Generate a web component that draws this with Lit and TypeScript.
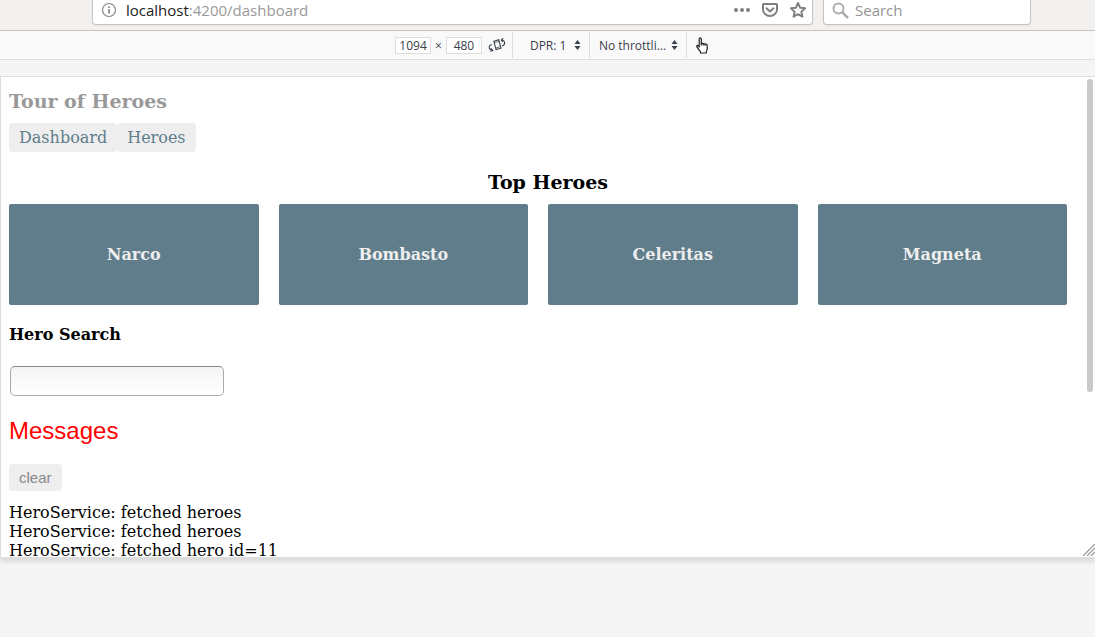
import { LitElement, html, css } from "lit";
import { customElement, property, state } from "lit/decorators.js";

const chromeFont = css`"Open Sans", "Noto Sans", sans-serif`;

@customElement("browser-bar")
class BrowserBar extends LitElement {
  static styles = css`
    :host {
      display: flex;
      gap: 10px;
      height: 30px;
      padding: 0 64px 0 92px;
      border-bottom: 1px solid #c8c4c0;
      background: #f2f1ef;
      font-family: ${chromeFont};
      font-size: 15px;
    }
    .box {
      box-sizing: border-box;
      display: flex;
      align-items: center;
      height: 25px;
      padding-bottom: 4px;
      border: 1px solid #c8c4c0;
      border-top: 0;
      border-radius: 0 0 4px 4px;
      background: #fff;
      box-shadow: 0 1px 2px rgba(0, 0, 0, 0.06);
    }
    .address {
      flex: 1;
      padding-left: 8px;
      padding-right: 5px;
    }
    .url {
      flex: 1;
      margin-left: 9px;
      color: #999;
    }
    .host {
      color: #222;
    }
    .actions {
      display: flex;
      align-items: center;
      gap: 10px;
    }
    button {
      display: flex;
      padding: 0;
      border: 0;
      background: none;
    }
    svg {
      display: block;
      flex: none;
    }
    .search {
      width: 208px;
      padding-left: 8px;
    }
    input {
      flex: 1;
      min-width: 0;
      margin-left: 6px;
      padding: 0;
      border: 0;
      outline: 0;
      background: none;
      font: inherit;
    }
    input::placeholder {
      color: #949494;
      opacity: 1;
    }
  `;

  render() {
    return html`
      <div class="box address">
        <svg width="16" height="16" viewBox="0 0 16 16" fill="none" stroke="#858585">
          <circle cx="8" cy="8" r="6.5" stroke-width="1.2" />
          <path d="M8 7.2v4.2M8 4.4v1.7" stroke-width="1.8" />
        </svg>
        <span class="url"><span class="host">localhost</span>:4200/dashboard</span>
        <div class="actions">
          <button aria-label="Page actions">
            <svg width="18" height="16" viewBox="0 0 18 16" fill="#808080">
              <circle cx="3" cy="8" r="2" /><circle cx="9" cy="8" r="2" /><circle cx="15" cy="8" r="2" />
            </svg>
          </button>
          <button aria-label="Save to Pocket">
            <svg width="18" height="16" viewBox="0 0 18 16" fill="none" stroke="#808080" stroke-width="2" stroke-linejoin="round" stroke-linecap="round">
              <path d="M2.5 2h13q.5 0 .5.5V7.500a7 6.500 0 0 1-14 0v-5q0-.5.5-.5z" />
              <path d="M5.500 6.300 9 9.500l3.500-3.200" />
            </svg>
          </button>
          <button aria-label="Bookmark this page">
            <svg width="18" height="18" viewBox="0 0 18 18" fill="none" stroke="#808080" stroke-width="2" stroke-linejoin="round">
              <path d="M9 2l2.100 4.700 5 .6-3.700 3.400 1 5L9 13.200l-4.400 2.500 1-5L1.900 7.300l5-.6z" />
            </svg>
          </button>
        </div>
      </div>
      <div class="box search">
        <svg width="17" height="17" viewBox="0 0 17 17" fill="none" stroke="#adadad" stroke-width="2">
          <circle cx="6.500" cy="6.500" r="5" />
          <path d="M10 10l6 6" stroke-width="2.500" />
        </svg>
        <input type="text" aria-label="Search" placeholder="Search" />
      </div>
    `;
  }
}

@customElement("device-bar")
class DeviceBar extends LitElement {
  static styles = css`
    :host {
      display: flex;
      justify-content: center;
      height: 28px;
      padding-left: 8px;
      border-bottom: 1px solid #ddd;
      background: #f9f9f9;
      color: #393f4c;
      font-family: ${chromeFont};
      font-size: 12px;
    }
    .group {
      box-sizing: border-box;
      display: flex;
      align-items: center;
      border-right: 1px solid #ddd;
      margin: 1px 0;
    }
    .size {
      gap: 4px;
      padding-right: 6px;
    }
    .size input {
      box-sizing: border-box;
      width: 36px;
      height: 17px;
      padding: 0;
      border: 1px solid #ddd;
      background: #fff;
      color: inherit;
      font: inherit;
      text-align: center;
    }
    .rotate {
      margin-left: 2px;
    }
    button {
      display: flex;
      align-items: center;
      padding: 0;
      border: 0;
      background: none;
    }
    .pick {
      padding-left: 17px;
      padding-right: 8px;
    }
    .throttle {
      padding-left: 9px;
    }
    select {
      appearance: none;
      padding: 0;
      border: 0;
      background: none;
      color: inherit;
      font: inherit;
      text-overflow: ellipsis;
    }
    .dpr {
      width: 44px;
    }
    .rate {
      width: 72px;
    }
    .touch {
      margin-left: 9px;
    }
  `;

  private arrows() {
    return html`<svg width="7" height="10" viewBox="0 0 7 10" fill="#393f4c">
      <path d="M3.500 0 6.500 4h-6zM3.500 10 .5 6h6z" />
    </svg>`;
  }

  render() {
    return html`
      <div class="group size">
        <input type="text" aria-label="Width" value="1094" />
        <span>×</span>
        <input type="text" aria-label="Height" value="480" />
        <button class="rotate" aria-label="Rotate viewport">
          <svg width="18" height="14" viewBox="0 0 18 14" fill="none" stroke="#393f4c" stroke-width="1.100">
            <path d="M5.800 3.200 10.700 1.800l2.300 8.400-4.900 1.400z" />
            <path d="M6.300 4.700l4.900-1.400M7.800 10l4.900-1.400" stroke-width=".7" />
            <path d="M3.800 6.500C1.500 6.800.8 8.800 1.500 10.500q.6 1.500 2.800 1.800M2.800 10.300l2 2-2.200 1.200" />
            <path d="M14 7.800c2.500-.5 3-2.500 2.300-4.200q-.6-1.500-2.800-1.600M15.200.4 13.200 2l1.800 2" />
          </svg>
        </button>
      </div>
      <div class="group pick">
        <select class="dpr" aria-label="Device pixel ratio"><option>DPR: 1</option></select>
        ${this.arrows()}
      </div>
      <div class="group pick throttle">
        <select class="rate" aria-label="Throttling"><option>No throttli…</option></select>
        ${this.arrows()}
      </div>
      <button class="touch" aria-label="Touch simulation">
        <svg width="12" height="17" viewBox="0 0 12 17" fill="#fff" stroke="#222" stroke-width="1.200" stroke-linejoin="round">
          <path d="M3.200 10V2q0-1.200 1-1.200T5.300 2v4.300q1-.7 1.900.4 1-.5 1.900.5 2-.3 2.100 1.300v3.200q0 1.500-.9 2.600V16H4.500v-1.300Q2.500 12.500.8 9.600q-.3-1.200.7-1.300.8 0 1.700 1.700z" />
          <path d="M5.300 6.300v2.200M7.200 6.700v1.900M9.100 7.200v1.500" fill="none" />
        </svg>
      </button>
    `;
  }
}

@customElement("hero-dashboard")
class HeroDashboard extends LitElement {
  @property({ attribute: false }) heroes: string[] = [];

  static styles = css`
    :host {
      display: block;
    }
    h3 {
      margin: 19px 0 11px;
      font-size: 19px;
      line-height: 22px;
      text-align: center;
    }
    .grid {
      display: grid;
      grid-template-columns: repeat(4, 1fr);
      gap: 20px;
      padding-right: 20px;
    }
    a {
      display: block;
      padding: 41px 20px;
      border-radius: 2px;
      background: #607d8b;
      color: #eee;
      font-weight: bold;
      line-height: 19px;
      text-align: center;
      text-decoration: none;
    }
    h4 {
      margin: 20px 0 22px;
      font-size: 16px;
      line-height: 19px;
    }
    label {
      display: block;
    }
    input {
      box-sizing: border-box;
      display: block;
      width: 214px;
      height: 30px;
      margin-left: 1px;
      padding: 5px;
      border: 1px solid #aaa;
      border-top-color: #888;
      border-radius: 5px;
      background: linear-gradient(#f4f5f5, #fff);
      font: inherit;
    }
  `;

  render() {
    return html`
      <h3>Top Heroes</h3>
      <nav class="grid">${this.heroes.map((name) => html`<a href="#">${name}</a>`)}</nav>
      <h4><label for="search-box">Hero Search</label></h4>
      <input id="search-box" type="text" />
    `;
  }
}

@customElement("app-root")
class AppRoot extends LitElement {
  @state() private messages = [
    "HeroService: fetched heroes",
    "HeroService: fetched heroes",
    "HeroService: fetched hero id=11",
  ];

  private heroes = ["Narco", "Bombasto", "Celeritas", "Magneta"];

  static styles = css`
    :host {
      display: block;
      min-height: 100vh;
      background: #f5f5f5;
      overflow: hidden;
    }
    .viewport {
      position: relative;
      display: flex;
      box-sizing: border-box;
      height: 482px;
      margin-top: 16px;
      border: 1px solid #ddd;
      border-right: 0;
      background: #fff;
      box-shadow: 0 4px 4px rgba(0, 0, 0, 0.1);
      overflow: hidden;
    }
    .page {
      flex: 1;
      min-width: 0;
      padding: 13px 0 0 8px;
      color: #000;
      font-family: "DejaVu Serif", serif;
      font-size: 16px;
      line-height: 19px;
    }
    h1 {
      margin: 0 0 11px;
      color: #999;
      font-size: 19px;
      line-height: 22px;
    }
    .links {
      display: flex;
    }
    .links a {
      padding: 5px 10px;
      border-radius: 4px;
      background: #eee;
      color: #607d8b;
      text-decoration: none;
    }
    h2 {
      margin: 21px 0 19px;
      color: #f00;
      font-family: "Liberation Sans", Arial, sans-serif;
      font-size: 24px;
      font-weight: normal;
      line-height: 28px;
    }
    .clear {
      display: block;
      margin-bottom: 12px;
      padding: 5px 10px;
      border: 0;
      border-radius: 4px;
      background: #eee;
      color: #888;
      font-family: "Liberation Sans", Arial, sans-serif;
      font-size: 15px;
      line-height: 17px;
    }
    .track {
      width: 8px;
      padding-top: 2px;
    }
    .thumb {
      width: 6px;
      height: 313px;
      border-radius: 3px;
      background: #c9c9c9;
    }
    .grip {
      position: absolute;
      right: 0;
      bottom: 1px;
    }
  `;

  render() {
    return html`
      <browser-bar></browser-bar>
      <device-bar></device-bar>
      <div class="viewport">
        <main class="page">
          <h1>Tour of Heroes</h1>
          <nav class="links"><a href="#">Dashboard</a><a href="#">Heroes</a></nav>
          <hero-dashboard .heroes=${this.heroes}></hero-dashboard>
          <h2>Messages</h2>
          <button class="clear" @click=${() => (this.messages = [])}>clear</button>
          ${this.messages.map((text) => html`<div>${text}</div>`)}
        </main>
        <div class="track"><div class="thumb"></div></div>
        <svg class="grip" width="13" height="13" viewBox="0 0 13 13" stroke="#999" stroke-width="1.200">
          <path d="M1 13 13 1M5 13l8-8M9 13l4-4" />
        </svg>
      </div>
    `;
  }
}
